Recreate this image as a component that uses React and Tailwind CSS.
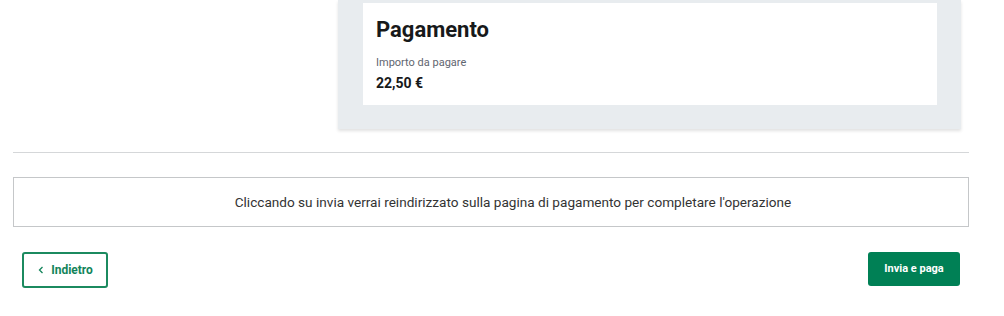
export default function App() {
    const font = { fontFamily: '"Roboto", "Liberation Sans", sans-serif' };

    return (
        <div className="min-h-screen bg-white" style={font}>
            <div className="ml-[13px] w-[956px]">
                {/* Riepilogo pagamento */}
                <div className="ml-[325px] w-[623px] bg-[#e8ecef] pt-[3px] pb-[24px] pl-[25px] pr-[24px] shadow-[0_2px_3px_rgba(0,0,0,0.12)]">
                    <div className="bg-white h-[102px] px-[13px] pt-[12px]">
                        <h2 className="text-[22px] font-bold leading-[30px] text-[#17191a]">Pagamento</h2>
                        <p className="mt-[10px] text-[11px] leading-[15px] text-[#5f6670]">Importo da pagare</p>
                        <p className="mt-[4px] text-[14px] font-bold leading-[18px] text-[#17191a]">22,50 €</p>
                    </div>
                </div>

                <hr className="mt-[23px] border-t border-[#d5d7d9]" />

                {/* Avviso */}
                <div className="mt-[24px] h-[50px] border border-[#c5c7c9] pl-[44px] flex items-center justify-center">
                    <p className="text-[13.6px] text-[#333333]">
                        Cliccando su invia verrai reindirizzato sulla pagina di pagamento per completare l'operazione
                    </p>
                </div>

                {/* Azioni */}
                <div className="mt-[25px] px-[9px] flex items-start justify-between">
                    <button className="w-[86px] h-[36px] rounded-[3px] border-2 border-[#1b8a5f] flex items-center justify-center gap-[6px] text-[12px] font-bold text-[#12845a]">
                        <svg className="w-[8px] h-[8px]" viewBox="0 0 8 8" fill="none" stroke="currentColor" strokeWidth="1.3">
                            <path d="M5.5 1 L2.5 4 L5.5 7" />
                        </svg>
                        Indietro
                    </button>
                    <button className="w-[92px] h-[34px] rounded-[3px] bg-[#008055] text-white text-[11px] font-bold">
                        Invia e paga
                    </button>
                </div>
            </div>
        </div>
    );
}
